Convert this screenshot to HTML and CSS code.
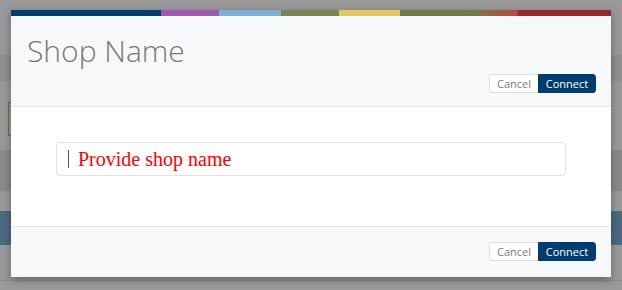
FILE: index.html
```html
<!DOCTYPE html>
<html>
<head>
<meta charset="utf-8">
<link rel="stylesheet" href="styles.css">
</head>
<body>
<div class="page">
  <div class="bg bg-gap1"></div>
  <div class="bg bg-band1"></div>
  <div class="bg bg-gap2"></div>
  <div class="bg bg-box"></div>
  <div class="bg bg-gap3"></div>
  <div class="bg bg-band2"></div>
  <div class="bg bg-gap4"></div>
  <div class="bg bg-blue"></div>
  <div class="bg bg-gap5"></div>
  <div class="bg bg-bottom"></div>
</div>
<div class="modal">
  <div class="stripe"></div>
  <div class="modal-header">
    <h1 class="title">Shop Name</h1>
    <div class="actions">
      <button class="btn btn-cancel">Cancel</button><button class="btn btn-connect">Connect</button>
    </div>
  </div>
  <div class="modal-body">
    <div class="input"><span class="caret"></span><span class="placeholder">Provide shop name</span></div>
  </div>
  <div class="modal-footer">
    <div class="actions">
      <button class="btn btn-cancel">Cancel</button><button class="btn btn-connect">Connect</button>
    </div>
  </div>
</div>
</body>
</html>
```
FILE: styles.css
```css
html, body { margin: 0; padding: 0; }
body {
  width: 622px;
  height: 290px;
  overflow: hidden;
  background: #999999;
  position: relative;
  font-family: "Open Sans", sans-serif;
}
.page { display: flex; flex-direction: column; }
.bg-gap1 { height: 54px; }
.bg-band1 { height: 27px; background: #8f8f8f; border-top: 1px solid #9c9c9c; box-sizing: border-box; }
.bg-gap2 { height: 21px; }
.bg-box { height: 34px; border: 1px solid #6f6a3c; box-sizing: border-box; margin-left: 8px; width: 20px; }
.bg-gap3 { height: 14px; }
.bg-band2 { height: 41px; background: #8a8a8a; }
.bg-gap4 { height: 20px; }
.bg-blue { height: 34px; background: #4b6a82; }
.bg-gap5 { height: 35px; }
.bg-bottom { height: 10px; border-top: 1px solid #8c8c8c; background: #9b9b9b; }

.modal {
  position: absolute;
  left: 11px;
  top: 10px;
  width: 600px;
  background: #fff;
  box-shadow: 0 3px 8px rgba(0,0,0,0.35);
}
.stripe {
  height: 6px;
  background: linear-gradient(to right,
    #013f70 0, #013f70 150px,
    #9b59b3 150px, #9b59b3 208px,
    #7cafd2 208px, #7cafd2 270px,
    #7b8159 270px, #7b8159 328px,
    #e0c865 328px, #e0c865 389px,
    #717b51 389px, #717b51 460px,
    #b94846 506px, #922c2e 508px, #922c2e 600px);
}
.modal-header {
  background: #f7f8fa;
  padding: 16px 15px 13px 16px;
  border-bottom: 1px solid #e3e5e8;
}
.title {
  margin: 0 0 4px 0;
  font-family: "Open Sans", sans-serif;
  font-weight: 300;
  font-size: 30px;
  line-height: 38px;
  color: #75787c;
}
.actions { display: flex; justify-content: flex-end; }
.btn {
  font-family: "Open Sans", sans-serif;
  font-size: 11px;
  height: 19px;
  line-height: 17px;
  padding: 0;
  box-sizing: border-box;
  cursor: pointer;
}
.btn-cancel {
  width: 49px;
  background: #fff;
  color: #7a7a7a;
  border: 1px solid #dedede;
  border-right: none;
  border-radius: 3px 0 0 3px;
}
.btn-connect {
  width: 58px;
  background: #003d6f;
  color: #fff;
  border: 1px solid #003d6f;
  border-radius: 0 3px 3px 0;
}
.modal-body {
  padding: 35px 45px 50px 45px;
  background: #fff;
}
.input {
  height: 34px;
  box-sizing: border-box;
  border: 1px solid #e1e1e1;
  border-radius: 4px;
  display: flex;
  align-items: center;
  padding-left: 11px;
}
.caret {
  width: 1px;
  height: 18px;
  background: #555;
  margin-right: 9px;
}
.placeholder {
  font-family: "Liberation Serif", serif;
  font-size: 20px;
  color: #ff0000;
}
.modal-footer {
  background: #f7f8fa;
  border-top: 1px solid #e3e5e8;
  padding: 15px 15px 16px 15px;
}
```
